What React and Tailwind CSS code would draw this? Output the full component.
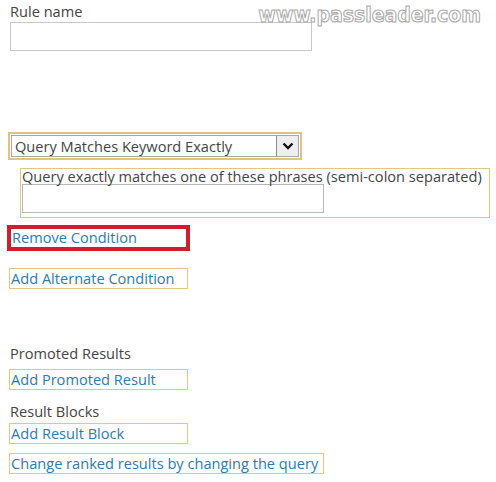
import React from "react";

const LinkBox = ({ children, className = "" }) => (
  <div
    className={`ml-[9px] h-[21px] border border-[#e2c685] text-[#2b7bb3] leading-[19px] pl-[1px] ${className}`}
  >
    {children}
  </div>
);

const App = () => {
  return (
    <div className="relative w-[496px] h-[482px] bg-white overflow-hidden font-['Open_Sans',sans-serif] text-[14.6px] text-[#444]">
      {/* watermark */}
      <div className="absolute right-[15px] top-[0px] text-[21px] font-bold text-white [-webkit-text-stroke:1px_#a8a8a8] font-['DejaVu_Sans_Condensed','DejaVu_Sans',sans-serif]">
        www.passleader.com
      </div>

      <div className="pl-[10px] pt-[2px] leading-[19px]">Rule name</div>
      <div className="ml-[10px] mt-[1px] w-[302px] h-[29px] border border-[#c8c8c8]" />

      {/* condition select */}
      <div className="ml-[8px] mt-[81px] w-[294px] h-[28px] border-2 border-[#e0c283] p-[1px]">
        <div className="flex h-full border border-[#a9a9a9] bg-white">
          <div className="flex-1 pl-[3px] leading-[21px]">Query Matches Keyword Exactly</div>
          <div className="w-[22px] h-full border-l border-[#8a8a8a] bg-[#eeeeee] flex items-center justify-center">
            <svg width="12" height="8" viewBox="0 0 12 8">
              <path d="M1.5 1.5 L6 6 L10.5 1.5" fill="none" stroke="#111" strokeWidth="2.4" />
            </svg>
          </div>
        </div>
      </div>

      {/* phrases */}
      <div className="ml-[20px] mt-[8px] w-[470px] h-[50px] border border-[#e2c685] pl-[1px]">
        <div className="leading-[15px] whitespace-nowrap">
          Query exactly matches one of these phrases (semi-colon separated)
        </div>
        <div className="w-[302px] h-[29px] border border-[#b8b8b8]" />
      </div>

      {/* remove */}
      <div className="ml-[7px] mt-[7px] w-[183px] h-[26px] border-4 border-[#cf1f2c] text-[#2b7bb3] leading-[17px] pl-[1px]">
        Remove Condition
      </div>

      <LinkBox className="mt-[17px] w-[179px]">Add Alternate Condition</LinkBox>

      <div className="pl-[10px] mt-[55px] leading-[19px]">Promoted Results</div>
      <LinkBox className="mt-[6px] w-[179px]">Add Promoted Result</LinkBox>

      <div className="pl-[10px] mt-[12px] leading-[19px]">Result Blocks</div>
      <LinkBox className="mt-[2px] w-[179px]">Add Result Block</LinkBox>

      <LinkBox className="mt-[9px] w-[315px] whitespace-nowrap">
        Change ranked results by changing the query
      </LinkBox>
    </div>
  );
};

export default App;
